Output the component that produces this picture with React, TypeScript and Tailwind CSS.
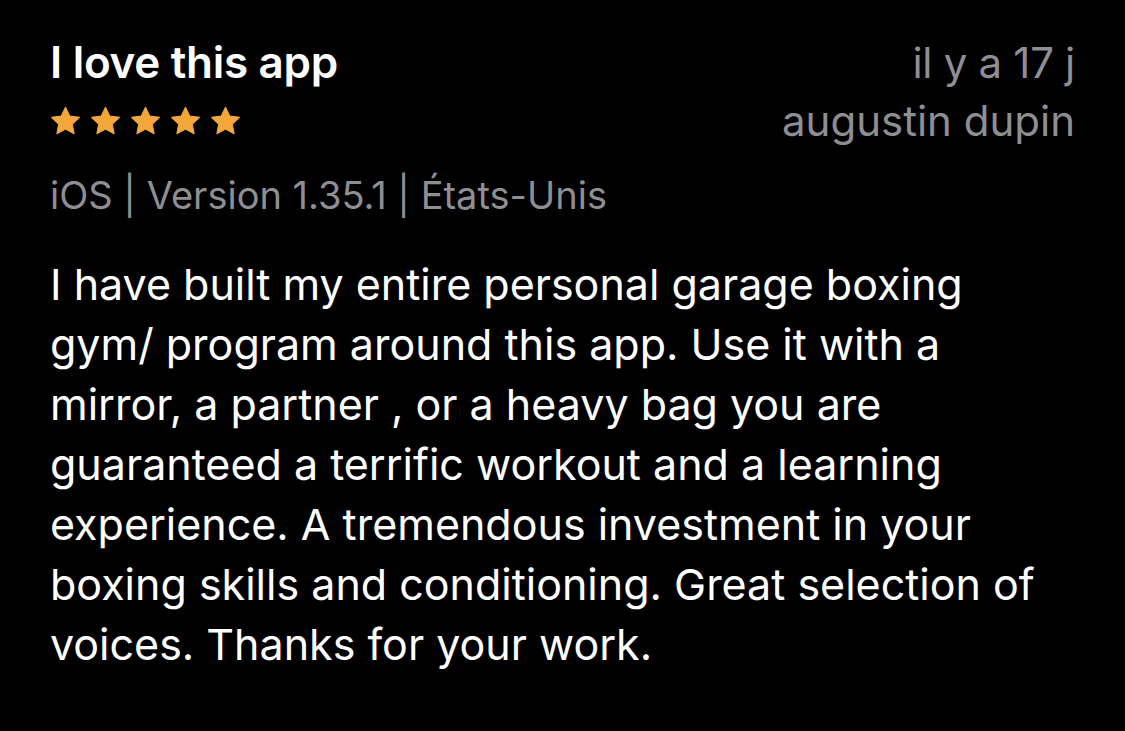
export default function App() {
  const lines = [
    'I have built my entire personal garage boxing',
    'gym/ program around this app. Use it with a',
    'mirror, a partner , or a heavy bag you are',
    'guaranteed a terrific workout and a learning',
    'experience. A tremendous investment in your',
    'boxing skills and conditioning. Great selection of',
    'voices. Thanks for your work.',
  ];

  return (
    <div className="min-h-screen w-[1125px] h-[731px] bg-black px-[50px] pt-[34px] text-white font-['Inter',sans-serif]">
      {/* Header */}
      <div className="flex justify-between">
        <div className="flex flex-col">
          <h1 className="text-[44px] leading-[56px] font-semibold tracking-[-0.3px]">I love this app</h1>
          <div className="flex gap-[9px] mt-[16px]">
            {[0, 1, 2, 3, 4].map((i) => (
              <svg key={i} width="31" height="30" viewBox="0 0 24 23">
                <path
                  d="M12 0.8l3.3 6.9 7.5 1-5.5 5.2 1.4 7.5L12 17.8l-6.7 3.6 1.4-7.5L1.2 8.7l7.5-1z"
                  fill="#f4a83b"
                  stroke="#f4a83b"
                  strokeWidth="0.8"
                  strokeLinejoin="round"
                />
              </svg>
            ))}
          </div>
        </div>
        <div className="flex flex-col items-end text-[#8e8e93] text-[42px] leading-[58px] font-normal">
          <span className="tracking-[-0.3px]">il y a 17 j</span>
          <span>augustin dupin</span>
        </div>
      </div>

      {/* Meta */}
      <p className="mt-[23px] text-[38px] leading-[44px] text-[#8e8e93]">iOS | Version 1.35.1 | États-Unis</p>

      {/* Body */}
      <div className="mt-[37px] text-[43px] leading-[60px]">
        {lines.map((l) => (
          <p key={l} className="whitespace-nowrap">{l}</p>
        ))}
      </div>
    </div>
  );
}
